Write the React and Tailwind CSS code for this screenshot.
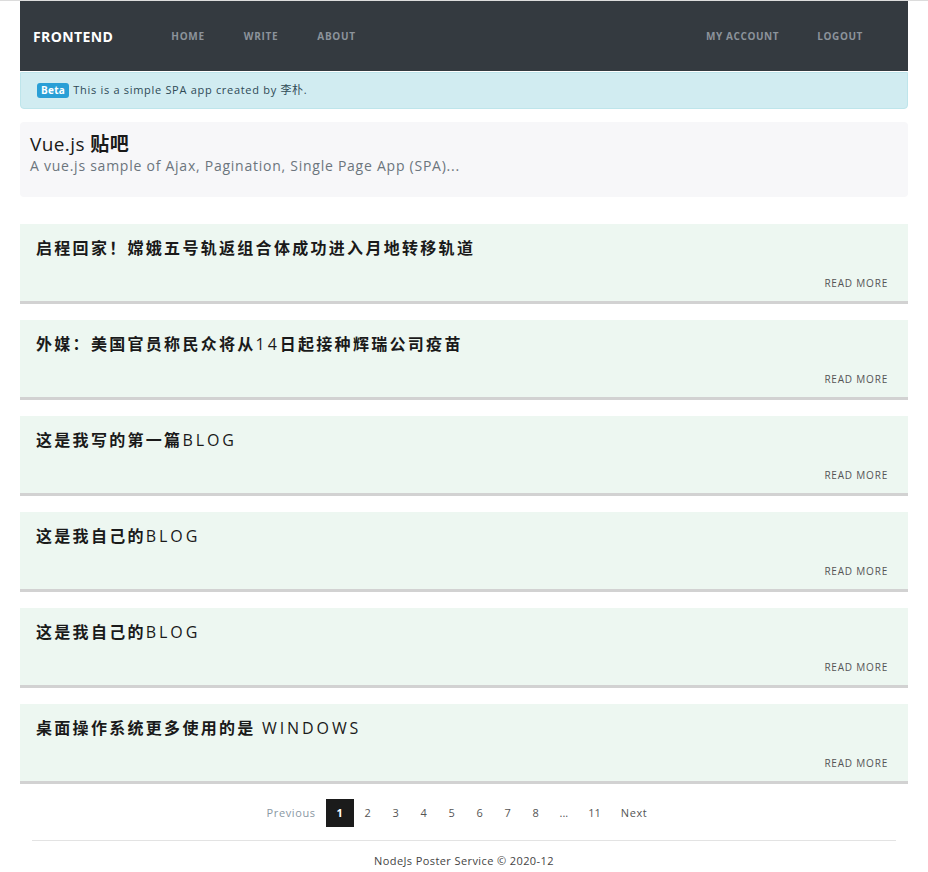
import React from "react";

const posts = [
  { zh: "启程回家！嫦娥五号轨返组合体成功进入月地转移轨道", en: "" },
  { zh: "外媒：美国官员称民众将从", en: "14", zh2: "日起接种辉瑞公司疫苗" },
  { zh: "这是我写的第一篇", en: "blog" },
  { zh: "这是我自己的", en: "blog" },
  { zh: "这是我自己的", en: "blog" },
  { zh: "桌面操作系统更多使用的是 ", en: "windows" },
];

const pages = ["1", "2", "3", "4", "5", "6", "7", "8", "...", "11"];

function Post({ post }) {
  return (
    <div className="bg-[#edf7f1] border-b-[3px] border-[#d2d2d2] h-[80px] px-4 pt-[14px] flex flex-col">
      <h3 className="text-[16px] leading-[20px] font-bold tracking-[2.3px] text-[#1a1a1a] uppercase">
        {post.zh}
        {post.en && <span className="font-normal tracking-[2.9px]">{post.en}</span>}
        {post.zh2}
      </h3>
      <div className="mt-auto mb-[10px] flex justify-end pr-1">
        <a className="text-[10px] tracking-[0.8px] text-[#555] uppercase">Read more</a>
      </div>
    </div>
  );
}

export default function App() {
  return (
    <div className="min-h-[872px] bg-white border-t border-[#dcdcdc] font-['Open_Sans','Noto_Sans_CJK_SC',sans-serif]">
      <div className="mx-5">
        {/* navbar */}
        <nav className="bg-[#343a40] h-[70px] flex items-center px-[13px]">
          <span className="text-white font-bold text-[14px] tracking-[0.4px] mr-[58px]">FRONTEND</span>
          <div className="flex gap-[39px] text-[10px] font-bold tracking-[0.7px] text-[#8c939b]">
            <a>HOME</a>
            <a>WRITE</a>
            <a>ABOUT</a>
          </div>
          <div className="ml-auto mr-[32px] flex gap-[38px] text-[10px] font-bold tracking-[0.6px] text-[#8c939b]">
            <a>MY ACCOUNT</a>
            <a>LOGOUT</a>
          </div>
        </nav>

        {/* alert */}
        <div className="mt-px h-[37px] bg-[#d1ecf1] border border-[#bee5eb] rounded-b-[4px] flex items-center px-4 text-[11px] text-[#2f4a56] tracking-[0.7px]">
          <span className="bg-[#2a9fd6] text-white font-bold text-[10px] leading-[15px] px-[4px] tracking-[0.3px] rounded-[3px] mr-[4px]">Beta</span>
          This is a simple SPA app created by 李朴.
        </div>

        {/* jumbotron */}
        <div className="mt-[13px] bg-[#f7f7f9] rounded-[4px] h-[75px] px-[10px] pt-[10px]">
          <h1 className="text-[19px] leading-[24px] text-[#1a1a1a] tracking-[0.4px]">
            Vue.js <span className="font-bold">贴吧</span>
          </h1>
          <p className="text-[14px] leading-[20px] text-[#6c757d] tracking-[0.75px]">
            A vue.js sample of Ajax, Pagination, Single Page App (SPA)...
          </p>
        </div>

        {/* posts */}
        <div className="mt-[27px] flex flex-col gap-[16px]">
          {posts.map((p, i) => (
            <Post key={i} post={p} />
          ))}
        </div>

        {/* pagination */}
        <div className="mt-[15px] pr-[14px] flex justify-center items-center text-[11px] text-[#555]">
          <a className="h-[28px] px-[10px] flex items-center text-[#8a97a3] tracking-[0.6px]">Previous</a>
          <div className="flex items-center">
            {pages.map((n, i) => (
              <a
                key={i}
                className={
                  n === "1"
                    ? "h-[28px] min-w-[28px] px-[10px] flex items-center justify-center bg-[#1b1b1b] text-white font-bold"
                    : "h-[28px] min-w-[28px] px-[10px] flex items-center justify-center"
                }
              >
                {n}
              </a>
            ))}
          </div>
          <a className="h-[28px] px-[10px] flex items-center tracking-[0.6px]">Next</a>
        </div>

        {/* footer */}
        <footer className="mx-3 mt-[13px] border-t border-[#e3e3e3] pt-[12px] text-center text-[11px] text-[#444] tracking-[0.4px]">
          NodeJs Poster Service © 2020-12
        </footer>
      </div>
    </div>
  );
}
